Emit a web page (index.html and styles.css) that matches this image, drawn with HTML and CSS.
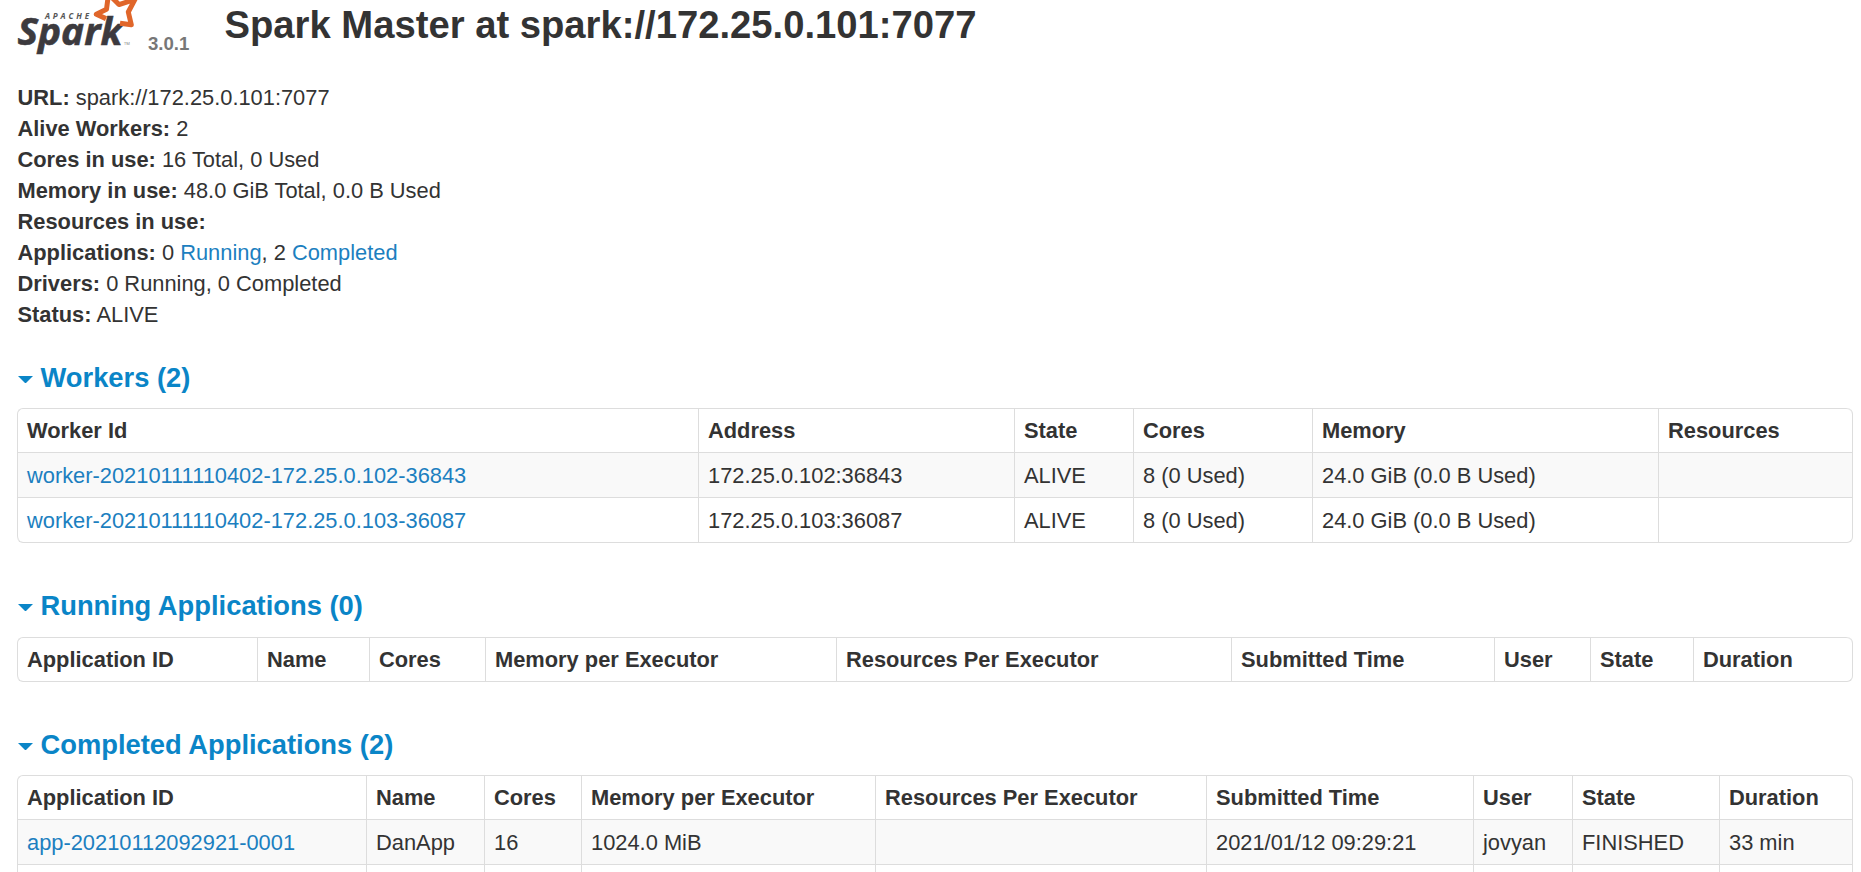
FILE: index.html
```html
<!DOCTYPE html>
<html lang="en">
<head>
<meta charset="utf-8">
<title>Spark Master at spark://172.25.0.101:7077</title>
<link rel="stylesheet" href="styles.css">
</head>
<body>
<header class="masthead">
  <svg class="logo" width="126" height="60" viewBox="0 0 126 60" role="img" aria-label="Apache Spark">
    <text class="logo-apache" x="27" y="19.3" textLength="44">APACHE</text>
    <text class="logo-spark" x="-0.5" y="44.7" textLength="105" lengthAdjust="spacingAndGlyphs">Spark</text>
    <path class="logo-star" d="M88 18.6 L78.3 14.2 L88.5 9.3 L90.5 -6 L101 4.6 L117 -0.6 L110.3 12 L113.3 24.8 L102 23.2"/>
    <text class="logo-tm" x="106" y="45">TM</text>
  </svg>
  <span class="version">3.0.1</span>
  <h1 class="title">Spark Master at spark://172.25.0.101:7077</h1>
</header>

<ul class="summary">
  <li><strong>URL:</strong> spark://172.25.0.101:7077</li>
  <li><strong>Alive Workers:</strong> 2</li>
  <li><strong>Cores in use:</strong> 16 Total, 0 Used</li>
  <li><strong>Memory in use:</strong> 48.0 GiB Total, 0.0 B Used</li>
  <li><strong>Resources in use:</strong></li>
  <li><strong>Applications:</strong> 0 <a href="#running">Running</a>, 2 <a href="#completed">Completed</a></li>
  <li><strong>Drivers:</strong> 0 Running, 0 Completed</li>
  <li><strong>Status:</strong> ALIVE</li>
</ul>

<section class="section">
  <h4 class="heading"><span class="caret"></span>Workers (2)</h4>
  <table class="grid">
    <colgroup><col class="w681"><col class="w316"><col class="w119"><col class="w179"><col class="w346"><col></colgroup>
    <thead><tr><th>Worker Id</th><th>Address</th><th>State</th><th>Cores</th><th>Memory</th><th>Resources</th></tr></thead>
    <tbody>
      <tr><td><a href="#w1">worker-20210111110402-172.25.0.102-36843</a></td><td>172.25.0.102:36843</td><td>ALIVE</td><td>8 (0 Used)</td><td>24.0 GiB (0.0 B Used)</td><td></td></tr>
      <tr><td><a href="#w2">worker-20210111110402-172.25.0.103-36087</a></td><td>172.25.0.103:36087</td><td>ALIVE</td><td>8 (0 Used)</td><td>24.0 GiB (0.0 B Used)</td><td></td></tr>
    </tbody>
  </table>
</section>

<section class="section" id="running">
  <h4 class="heading roomy"><span class="caret"></span>Running Applications (0)</h4>
  <table class="grid">
    <colgroup><col class="w240"><col class="w112"><col class="w116"><col class="w351"><col class="w395"><col class="w263"><col class="w96"><col class="w103"><col></colgroup>
    <thead><tr><th>Application ID</th><th>Name</th><th>Cores</th><th>Memory per Executor</th><th>Resources Per Executor</th><th>Submitted Time</th><th>User</th><th>State</th><th>Duration</th></tr></thead>
  </table>
</section>

<section class="section" id="completed">
  <h4 class="heading"><span class="caret"></span>Completed Applications (2)</h4>
  <table class="grid">
    <colgroup><col class="w349"><col class="w118"><col class="w97"><col class="w294"><col class="w331"><col class="w267"><col class="w99"><col class="w147"><col></colgroup>
    <thead><tr><th>Application ID</th><th>Name</th><th>Cores</th><th>Memory per Executor</th><th>Resources Per Executor</th><th>Submitted Time</th><th>User</th><th>State</th><th>Duration</th></tr></thead>
    <tbody>
      <tr><td><a href="#a1">app-20210112092921-0001</a></td><td>DanApp</td><td>16</td><td>1024.0 MiB</td><td></td><td>2021/01/12 09:29:21</td><td>jovyan</td><td>FINISHED</td><td>33 min</td></tr>
      <tr><td></td><td></td><td></td><td></td><td></td><td></td><td></td><td></td><td></td></tr>
    </tbody>
  </table>
</section>
</body>
</html>
```
FILE: styles.css
```css
* { box-sizing: border-box; }
html { height: 100%; overflow: hidden; }
body {
  margin: 0;
  padding: 0 8px 0 17px;
  height: 872px;
  overflow: hidden;
  background: #fff;
  color: #333;
  font-family: "Liberation Sans", Arial, sans-serif;
  font-size: 21.85px;
  line-height: 31px;
}
a { color: #1c7fc0; text-decoration: none; }

.masthead { display: flex; height: 82px; align-items: flex-start; }
.logo { display: block; flex: none; margin-left: 1px; overflow: visible; }
.logo-apache { font: italic bold 8px "Open Sans", sans-serif; fill: #555; }
.logo-spark {
  font: italic 700 37px "Open Sans", sans-serif;
  fill: #3c3a3e;
  stroke: #3c3a3e;
  stroke-width: 0.6;
}
.logo-tm { font: 4px "Open Sans", sans-serif; fill: #777; }
.logo-star { fill: none; stroke: #e0662a; stroke-width: 5; stroke-linejoin: round; }
.version { margin: 28px 0 0 4px; width: 76.5px; font-size: 18.6px; font-weight: bold; color: #777; }
.title { margin: 0; padding-top: 3px; font-size: 38.22px; line-height: 44px; font-weight: bold; white-space: nowrap; }

.summary { list-style: none; margin: 0; padding: 0 0 0 0.5px; }
.summary li { height: 31px; }

.section { padding-top: 32px; }
.section + .section { padding-top: 47px; }
.heading {
  display: flex;
  align-items: center;
  margin: 0 0 15px;
  height: 31px;
  font-size: 27.33px;
  font-weight: bold;
  color: #0a85c7;
}
.heading.roomy { margin-bottom: 16px; }
.caret {
  width: 15px;
  margin: 3px 8px 0 0.5px;
  border: 7.5px solid transparent;
  border-top-color: #0a85c7;
  border-bottom: 0;
}

.grid {
  width: 1836px;
  table-layout: fixed;
  border: solid #ddd;
  border-width: 0 1px 1px 0;
  border-radius: 6px;
  border-collapse: separate;
  border-spacing: 0;
}
.grid th, .grid td {
  padding: 6px 9px;
  height: 44px;
  border: solid #ddd;
  border-width: 1px 0 0 1px;
  text-align: left;
  vertical-align: top;
  white-space: nowrap;
}
.grid td { height: 45px; padding-top: 7px; }
.grid tbody tr:nth-child(odd) td { background: #f9f9f9; }
.grid thead th:first-child { border-top-left-radius: 6px; }
.grid thead th:last-child { border-top-right-radius: 6px; }
.grid tbody tr:last-child td:first-child,
.grid thead:last-child th:first-child { border-bottom-left-radius: 6px; }

.w681 { width: 681px; } .w316 { width: 316px; } .w119 { width: 119px; } .w179 { width: 179px; } .w346 { width: 346px; }
.w240 { width: 240px; } .w112 { width: 112px; } .w116 { width: 116px; } .w351 { width: 351px; } .w395 { width: 395px; }
.w263 { width: 263px; } .w96 { width: 96px; } .w103 { width: 103px; }
.w349 { width: 349px; } .w118 { width: 118px; } .w97 { width: 97px; } .w294 { width: 294px; } .w331 { width: 331px; }
.w267 { width: 267px; } .w99 { width: 99px; } .w147 { width: 147px; }
```
